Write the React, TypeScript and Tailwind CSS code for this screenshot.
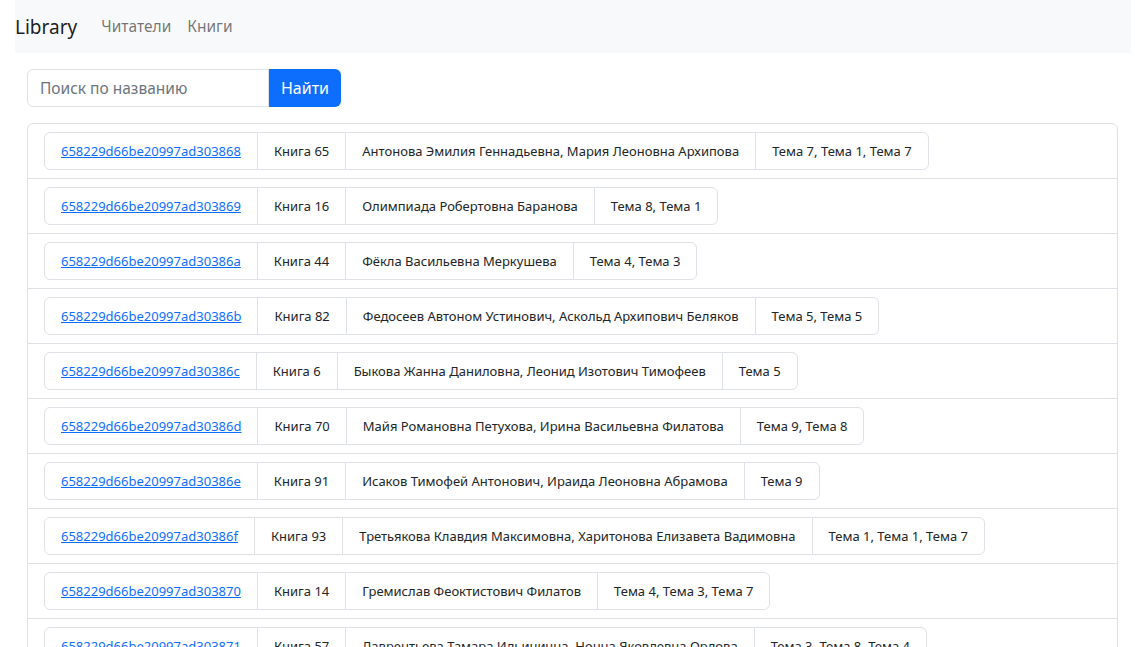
import React, { useState } from 'react';

type Book = {
  id: string;
  title: string;
  authors: string;
  themes: string;
};

const BOOKS: Book[] = [
  { id: '658229d66be20997ad303868', title: 'Книга 65', authors: 'Антонова Эмилия Геннадьевна, Мария Леоновна Архипова', themes: 'Тема 7, Тема 1, Тема 7' },
  { id: '658229d66be20997ad303869', title: 'Книга 16', authors: 'Олимпиада Робертовна Баранова', themes: 'Тема 8, Тема 1' },
  { id: '658229d66be20997ad30386a', title: 'Книга 44', authors: 'Фёкла Васильевна Меркушева', themes: 'Тема 4, Тема 3' },
  { id: '658229d66be20997ad30386b', title: 'Книга 82', authors: 'Федосеев Автоном Устинович, Аскольд Архипович Беляков', themes: 'Тема 5, Тема 5' },
  { id: '658229d66be20997ad30386c', title: 'Книга 6', authors: 'Быкова Жанна Даниловна, Леонид Изотович Тимофеев', themes: 'Тема 5' },
  { id: '658229d66be20997ad30386d', title: 'Книга 70', authors: 'Майя Романовна Петухова, Ирина Васильевна Филатова', themes: 'Тема 9, Тема 8' },
  { id: '658229d66be20997ad30386e', title: 'Книга 91', authors: 'Исаков Тимофей Антонович, Ираида Леоновна Абрамова', themes: 'Тема 9' },
  { id: '658229d66be20997ad30386f', title: 'Книга 93', authors: 'Третьякова Клавдия Максимовна, Харитонова Елизавета Вадимовна', themes: 'Тема 1, Тема 1, Тема 7' },
  { id: '658229d66be20997ad303870', title: 'Книга 14', authors: 'Гремислав Феоктистович Филатов', themes: 'Тема 4, Тема 3, Тема 7' },
  { id: '658229d66be20997ad303871', title: 'Книга 57', authors: 'Лаврентьева Тамара Ильинична, Нонна Яковлевна Орлова', themes: 'Тема 3, Тема 8, Тема 4' },
];

const BookRow: React.FC<{ book: Book }> = ({ book }) => (
  <li className="px-4 py-2 border-b border-[#dee2e6] last:border-b-0">
    <div className="inline-flex border border-[#dee2e6] rounded-md text-[13px] leading-[20px] text-[#212529]">
      <div className="px-4 py-2">
        <a href="#" className="text-[#0d6efd] underline">{book.id}</a>
      </div>
      <div className="px-4 py-2 border-l border-[#dee2e6]">{book.title}</div>
      <div className="px-4 py-2 border-l border-[#dee2e6]">{book.authors}</div>
      <div className="px-4 py-2 border-l border-[#dee2e6]">{book.themes}</div>
    </div>
  </li>
);

const App: React.FC = () => {
  const [query, setQuery] = useState('');

  return (
    <div className="min-h-screen bg-white font-['Noto_Sans',sans-serif] text-[#212529]">
      <nav className="ml-[15px] mr-[4px] h-[53px] bg-[#f8f9fa] flex items-center">
        <span className="text-[19px] leading-[30px] text-black/90 mr-4">Library</span>
        <a href="#" className="px-2 text-[15.5px] text-black/55">Читатели</a>
        <a href="#" className="px-2 text-[15.5px] text-black/55">Книги</a>
      </nav>

      <div className="pl-[27px] pr-[17px]">
        <form className="mt-4 flex" onSubmit={e => e.preventDefault()}>
          <input
            value={query}
            onChange={e => setQuery(e.target.value)}
            placeholder="Поиск по названию"
            className="w-[242px] h-[38px] px-3 text-[15.5px] border border-[#dee2e6] rounded-l-md outline-none placeholder:text-[#6c757d]"
          />
          <button className="h-[38px] w-[72px] bg-[#0d6efd] text-white text-[16px] rounded-r-md">Найти</button>
        </form>

        <ul className="mt-[16px] border border-[#dee2e6] rounded-md">
          {BOOKS.map(b => <BookRow key={b.id} book={b} />)}
        </ul>
      </div>
    </div>
  );
};

export default App;
